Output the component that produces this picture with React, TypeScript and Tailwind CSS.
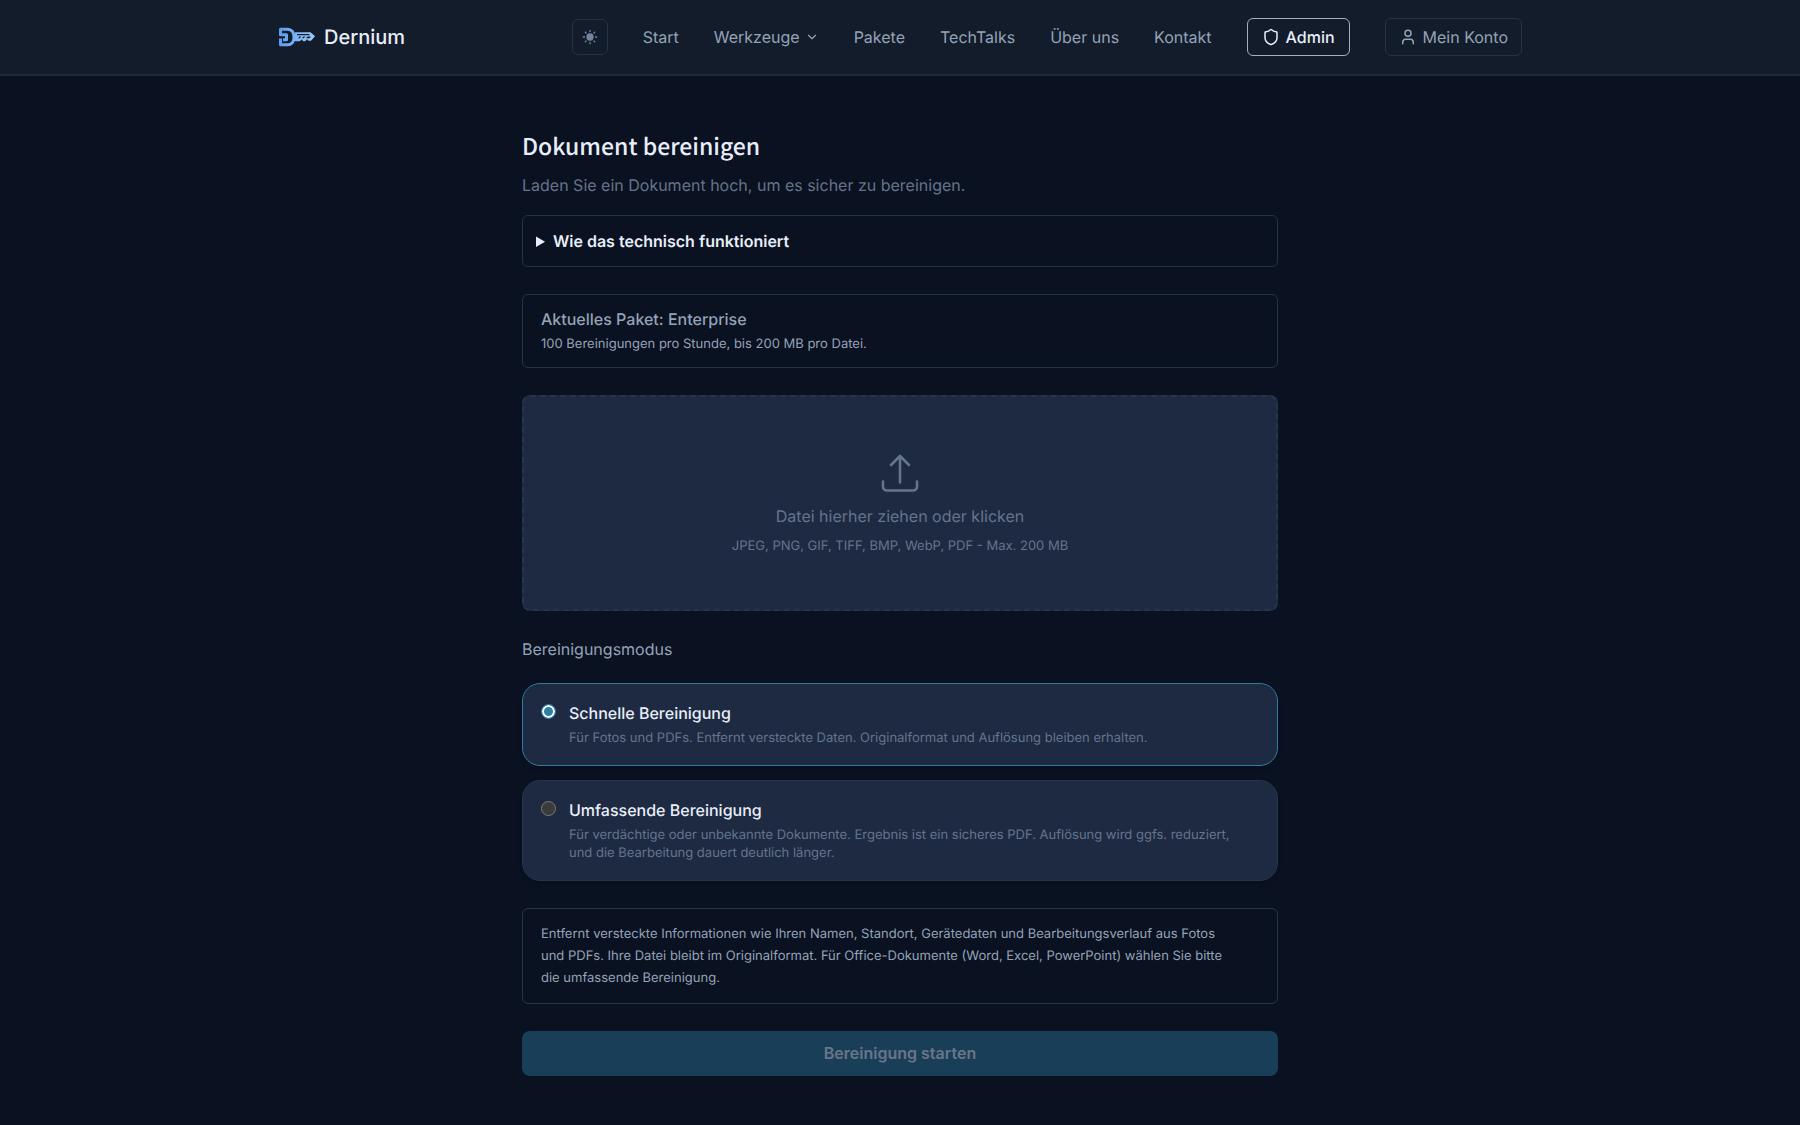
import { ChevronDown, Shield, User } from "lucide-react";
import { useState } from "react";

const NAV_ITEMS = ["Pakete", "TechTalks", "Über uns", "Kontakt"];

const MODES = [
  {
    id: "fast",
    title: "Schnelle Bereinigung",
    text: "Für Fotos und PDFs. Entfernt versteckte Daten. Originalformat und Auflösung bleiben erhalten.",
  },
  {
    id: "full",
    title: "Umfassende Bereinigung",
    text: "Für verdächtige oder unbekannte Dokumente. Ergebnis ist ein sicheres PDF. Auflösung wird ggfs. reduziert, und die Bearbeitung dauert deutlich länger.",
  },
];

export default function App() {
  const [mode, setMode] = useState("fast");

  return (
    <div className="min-h-screen bg-[#0a1120] font-['Inter',sans-serif] text-base text-[#94a3b8] [text-rendering:geometricPrecision]">
      <Header />
      <main className="mx-auto w-full max-w-[756px] pt-[51px] pb-[50px]">
        <h1 className="font-['Noto_Sans_CJK_SC',sans-serif] text-[23px] leading-[36px] font-medium text-[#e8eef9]">
          Dokument bereinigen
        </h1>
        <p className="mt-[10px] leading-6 text-[#64748b]">
          Laden Sie ein Dokument hoch, um es sicher zu bereinigen.
        </p>

        <details className="mt-[18px] rounded-md border border-[#273245] px-[13px] py-3">
          <summary className="cursor-pointer leading-[26px] font-semibold text-[#e8eef9]">
            Wie das technisch funktioniert
          </summary>
        </details>

        <section className="mt-[27px] rounded-md border border-[#273245] px-[18px] py-3">
          <p className="leading-6 font-medium">Aktuelles Paket: Enterprise</p>
          <p className="mt-0.5 text-[13px] leading-[22px]">
            100 Bereinigungen pro Stunde, bis 200 MB pro Datei.
          </p>
        </section>

        <label className="mt-[27px] flex h-[216px] cursor-pointer flex-col items-center justify-center rounded-lg border-2 border-dashed border-[#26344c] bg-[#1e2a42] pt-0.5 text-[#64748b]">
          <input type="file" className="sr-only" />
          <UploadIcon />
          <span className="mt-[10px] leading-6">Datei hierher ziehen oder klicken</span>
          <span className="mt-2 text-[13px] leading-5">
            JPEG, PNG, GIF, TIFF, BMP, WebP, PDF - Max. 200 MB
          </span>
        </label>

        <fieldset className="mt-[26px]">
          <legend className="leading-6">Bereinigungsmodus</legend>
          <div className="mt-[22px] flex flex-col gap-[14px]">
            {MODES.map((m) => (
              <label
                key={m.id}
                className={`flex cursor-pointer items-start gap-[13px] rounded-[18px] border bg-[#1e2a42] px-[18px] pt-[17px] pb-[18px] shadow-md ${
                  mode === m.id ? "border-[#2e7d9f]" : "border-[#26344c]"
                }`}
              >
                <input
                  type="radio"
                  name="mode"
                  value={m.id}
                  checked={mode === m.id}
                  onChange={() => setMode(m.id)}
                  className="mt-[3px] size-[15px] shrink-0 appearance-none rounded-full border border-[#7a7a7a] bg-[#3b3b3b] checked:border-[#2e7fa8] checked:bg-[#2e7fa8] checked:shadow-[inset_0_0_0_2px_white]"
                />
                <span className="flex flex-col">
                  <span className="leading-6 font-medium text-[#e8eef9]">{m.title}</span>
                  <span className="mt-1 pr-2 text-[13px] leading-[18px] text-[#64748b]">
                    {m.text}
                  </span>
                </span>
              </label>
            ))}
          </div>
        </fieldset>

        <p className="mt-[27px] rounded-md border border-[#273245] px-[18px] py-[14px] text-[13px] leading-[22px]">
          Entfernt versteckte Informationen wie Ihren Namen, Standort, Gerätedaten und
          Bearbeitungsverlauf aus Fotos
          <br />
          und PDFs. Ihre Datei bleibt im Originalformat. Für Office-Dokumente (Word, Excel,
          PowerPoint) wählen Sie bitte
          <br />
          die umfassende Bereinigung.
        </p>

        <button
          type="button"
          disabled
          className="mt-[27px] h-[45px] w-full rounded-lg bg-[#193f58] pb-0.5 font-semibold text-[#697588]"
        >
          Bereinigung starten
        </button>
      </main>
    </div>
  );
}

function Header() {
  return (
    <header className="border-b-2 border-[#1e293b] bg-[#131c2a]">
      <div className="mx-auto flex h-[74px] max-w-[1280px] items-center justify-between px-[18px]">
        <a href="#" className="flex items-center gap-2 text-xl font-medium text-[#e8eef9]">
          <Logo />
          Dernium
        </a>
        <nav className="flex items-center gap-[35px]">
          <button
            type="button"
            aria-label="Helles Design"
            className="grid size-9 place-items-center rounded-md border border-[#273245] text-[#7485a0]"
          >
            <SunIcon />
          </button>
          <a href="#">Start</a>
          <button type="button" className="flex items-center gap-[5px]">
            Werkzeuge
            <ChevronDown size={14} />
          </button>
          {NAV_ITEMS.map((item) => (
            <a key={item} href="#">
              {item}
            </a>
          ))}
          <a
            href="#"
            className="flex h-[38px] items-center gap-[6px] rounded-md border border-[#a3b0c4] px-[14px] font-medium text-[#e8eef9]"
          >
            <Shield size={18} />
            Admin
          </a>
          <a
            href="#"
            className="flex h-[38px] items-center gap-[6px] rounded-md border border-[#273245] px-[13px]"
          >
            <User size={18} />
            Mein Konto
          </a>
        </nav>
      </div>
    </header>
  );
}

function Logo() {
  return (
    <svg width="38" height="20" viewBox="0 0 38 20" fill="none" aria-hidden="true">
      <defs>
        <linearGradient id="logo-fill" gradientUnits="userSpaceOnUse" x1="0" y1="0" x2="38" y2="0">
          <stop offset="0%" stopColor="#5b9bf0" />
          <stop offset="100%" stopColor="#9dd0fb" />
        </linearGradient>
      </defs>
      {/* D-shaped bow */}
      <path
        stroke="url(#logo-fill)"
        strokeWidth="3"
        strokeLinejoin="round"
        d="M2.5 11.5V17.8H9.5C13.5 17.8 16 14.8 16 10C16 5.2 13.5 2.2 9.5 2.2H2.5V7.8H8.5V12.8H5"
      />
      {/* blade with notches */}
      <path
        fill="url(#logo-fill)"
        fillRule="evenodd"
        d="M17 5.2H32.5L37 9.2L33 13.8H30.5L29 12.3L27.2 14.3H25.2L23.7 12.5L21.7 14.3H17Z M19 7V8.3H31.5V7Z M21.5 9.6L20 11.2H21.8L23.3 9.6Z M25.5 9.6L24 11.2H25.8L27.3 9.6Z M29.5 9.6L28 11.2H31.5L33 9.6Z"
      />
    </svg>
  );
}

function SunIcon() {
  return (
    <svg width="16" height="16" viewBox="0 0 16 16" stroke="currentColor" strokeWidth="1.3" strokeLinecap="round" aria-hidden="true">
      <circle cx="8" cy="8" r="3" fill="currentColor" />
      <path d="M8 1.3v1.2M8 13.5v1.2M1.3 8h1.2M13.5 8h1.2M3.3 3.3l.8.8M11.9 11.9l.8.8M3.3 12.7l.8-.8M11.9 4.1l.8-.8" />
    </svg>
  );
}

function UploadIcon() {
  return (
    <svg
      width="42"
      height="42"
      viewBox="0 0 42 42"
      fill="none"
      stroke="currentColor"
      strokeWidth="2.6"
      strokeLinecap="round"
      strokeLinejoin="round"
      aria-hidden="true"
    >
      <path d="M21 30.5V4M12 13l9-9 9 9M4 29.5v5a4 4 0 0 0 4 4h26a4 4 0 0 0 4-4v-5" />
    </svg>
  );
}
